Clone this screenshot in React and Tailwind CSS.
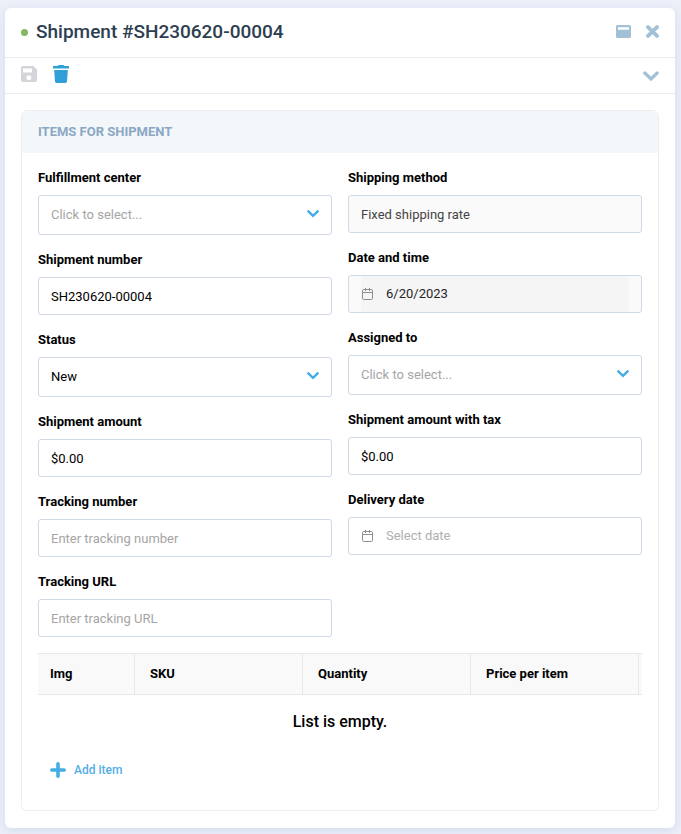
const BOX = "w-full rounded-[3px] border border-[#d0d9e8] px-3 text-[13px] outline-none placeholder:text-[#a5a5a5] placeholder:opacity-100";

function Field({ id, label, children }) {
  return (
    <div className="flex flex-col gap-[7px]">
      <label htmlFor={id} className="text-[13px] leading-5 font-bold text-black">
        {label}
      </label>
      {children}
    </div>
  );
}

function TextField({ id, label, ...rest }) {
  return (
    <Field id={id} label={label}>
      <input id={id} type="text" className={`${BOX} h-[38px] bg-white text-black disabled:bg-[#fafafa] disabled:text-[#444444]`} {...rest} />
    </Field>
  );
}

function SelectField({ id, label, options, empty }) {
  return (
    <Field id={id} label={label}>
      <div className="relative">
        <select id={id} className={`${BOX} h-10 appearance-none bg-white pb-px ${empty ? "text-[#a5a5a5]" : "text-black"}`}>
          {options.map((o) => (
            <option key={o}>{o}</option>
          ))}
        </select>
        <svg className="pointer-events-none absolute top-3.5 right-3 h-2.5 w-3.5" viewBox="0 0 14 10" fill="none" stroke="#43ade5" strokeWidth="2.4">
          <path d="M1.6 1.6 7 6.8l5.4-5.2" />
        </svg>
      </div>
    </Field>
  );
}

function CalendarIcon() {
  return (
    <svg className="h-3.5 w-[13px] shrink-0" viewBox="0 0 13 14" fill="none" stroke="#8e8e8e">
      <rect x="1.5" y="2.5" width="10" height="10" rx="1.2" />
      <path d="M2 5.500h9M4.500 1v3M8.500 1v3" />
    </svg>
  );
}

function DateField({ id, label, disabled, ...rest }) {
  return (
    <Field id={id} label={label}>
      <div className={`flex h-[38px] rounded-[3px] border border-[#d0d9e8] px-3 ${disabled ? "bg-[#fafafa]" : "bg-white"}`}>
        <div className={`flex w-full items-center gap-3 rounded-[3px] ${disabled ? "bg-[#f5f5f5]" : ""}`}>
          <CalendarIcon />
          <input id={id} type="text" disabled={disabled} className="w-full min-w-0 bg-transparent text-[13px] text-[#262626] outline-none placeholder:text-[#b0b0b0] placeholder:opacity-100" {...rest} />
        </div>
      </div>
    </Field>
  );
}

export default function App() {
  return (
    <div className="min-h-screen bg-[#edf0f9] pt-2 pr-1.5 pb-1.5 pl-[5px] font-['Roboto',sans-serif]">
      <main className="rounded-md bg-white pb-[17px] shadow-[0_3px_12px_rgba(120,145,190,0.22)]">
        <header className="flex h-[50px] items-center border-b border-[#e8ebf1] pr-[15px] pl-4">
          <span className="mr-2 size-[7px] rounded-full bg-[#86b663]" />
          <h1 className="grow text-[19px] font-medium text-[#2c3e50]">Shipment #SH230620-00004</h1>
          <div className="flex items-center gap-3.5 pb-0.5">
            <button type="button" aria-label="Minimize" className="block">
              <svg className="h-[13px] w-[15px]" viewBox="0 0 15 13">
                <path fill="#a3c1d6" fillRule="evenodd" d="M1.5 0h12A1.5 1.5 0 0 1 15 1.5v10a1.5 1.5 0 0 1-1.5 1.5h-12A1.5 1.5 0 0 1 0 11.5v-10A1.5 1.5 0 0 1 1.5 0ZM2 2.200v2.600h11V2.200Z" />
              </svg>
            </button>
            <button type="button" aria-label="Close" className="block">
              <svg className="h-[13px] w-[15px]" viewBox="0 0 15 13" stroke="#a3c1d6" strokeWidth="3.8" strokeLinecap="round">
                <path d="M3 2.100 12 10.900M12 2.100 3 10.900" />
              </svg>
            </button>
          </div>
        </header>

        <div className="flex h-9 items-center justify-between border-b border-[#e8ebf1] px-4">
          <div className="flex items-center gap-4 pb-[3px]">
            <button type="button" aria-label="Save" disabled>
              <svg className="block size-4" viewBox="0 0 16 16">
                <path fill="#d3d5da" fillRule="evenodd" d="M1.800 0h10.700L16 3.500v10.700a1.800 1.800 0 0 1-1.800 1.800H1.800A1.800 1.800 0 0 1 0 14.200V1.800A1.800 1.800 0 0 1 1.800 0ZM2 2.500v4h9v-4ZM8 9.200a2.500 2.500 0 1 0 0 5 2.500 2.500 0 0 0 0-5Z" />
              </svg>
            </button>
            <button type="button" aria-label="Delete">
              <svg className="block h-[18px] w-4" viewBox="0 0 16 18" fill="#309fd8">
                <path d="M5.500 0h5l.8 1H16v2.500H0V1h4.700ZM1.200 5h13.600l-.8 11.500a1.600 1.600 0 0 1-1.600 1.500H3.600A1.600 1.600 0 0 1 2 16.500Z" />
              </svg>
            </button>
          </div>
          <button type="button" aria-label="Expand">
            <svg className="block h-2.5 w-4" viewBox="0 0 16 10" fill="none" stroke="#a3c1d6" strokeWidth="3.2" strokeLinecap="round">
              <path d="M1.800 2 8 8l6.200-6" />
            </svg>
          </button>
        </div>

        <section className="mx-4 mt-4 rounded-md border border-[#eceef2]">
          <h2 className="rounded-t-md bg-[#f3f7fa] px-4 py-[11px] text-[13px] leading-5 font-bold text-[#8aa8c4]">
            ITEMS FOR SHIPMENT
          </h2>
          <form className="px-4 pt-[15px]">
            <div className="grid grid-cols-2 gap-4">
              <div className="flex flex-col gap-[15px]">
                <SelectField id="center" label="Fulfillment center" options={["Click to select..."]} empty />
                <TextField id="number" label="Shipment number" defaultValue="SH230620-00004" />
                <SelectField id="status" label="Status" options={["New"]} />
                <TextField id="amount" label="Shipment amount" defaultValue="$0.00" />
                <TextField id="tracking" label="Tracking number" placeholder="Enter tracking number" />
                <TextField id="url" label="Tracking URL" placeholder="Enter tracking URL" />
              </div>
              <div className="flex flex-col gap-[15px]">
                <TextField id="method" label="Shipping method" defaultValue="Fixed shipping rate" disabled />
                <DateField id="date" label="Date and time" defaultValue="6/20/2023" disabled />
                <SelectField id="assigned" label="Assigned to" options={["Click to select..."]} empty />
                <TextField id="amount-tax" label="Shipment amount with tax" defaultValue="$0.00" />
                <DateField id="delivery" label="Delivery date" placeholder="Select date" />
              </div>
            </div>

            <table className="mt-4 w-full table-fixed border-separate border-spacing-0 text-left text-[13px]">
              <thead>
                <tr className="h-[42px] bg-[#f9f9f9]">
                  <th className="w-[97px] border-y border-r border-[#e6e8ee] px-3 font-bold">Img</th>
                  <th className="border-y border-r border-[#e6e8ee] px-[15px] font-bold">SKU</th>
                  <th className="border-y border-r border-[#e6e8ee] px-[15px] font-bold">Quantity</th>
                  <th className="border-y border-r border-[#e6e8ee] px-[15px] font-bold">Price per item</th>
                  <th className="w-[3px] border-y border-[#e6e8ee] p-0" />
                </tr>
              </thead>
              <tbody>
                <tr>
                  <td colSpan={5} className="pt-[15px] pb-[26px] text-center text-base font-medium">
                    List is empty.
                  </td>
                </tr>
              </tbody>
            </table>

            <button type="button" className="mb-[30px] ml-3 flex items-center gap-2 text-xs leading-5 font-medium text-[#55aee4]">
              <svg className="size-4" viewBox="0 0 16 16" stroke="#43ade5" strokeWidth="3.6" strokeLinecap="round">
                <path d="M8 1.800v12.400M1.800 8h12.400" />
              </svg>
              Add item
            </button>
          </form>
        </section>
      </main>
    </div>
  );
}
